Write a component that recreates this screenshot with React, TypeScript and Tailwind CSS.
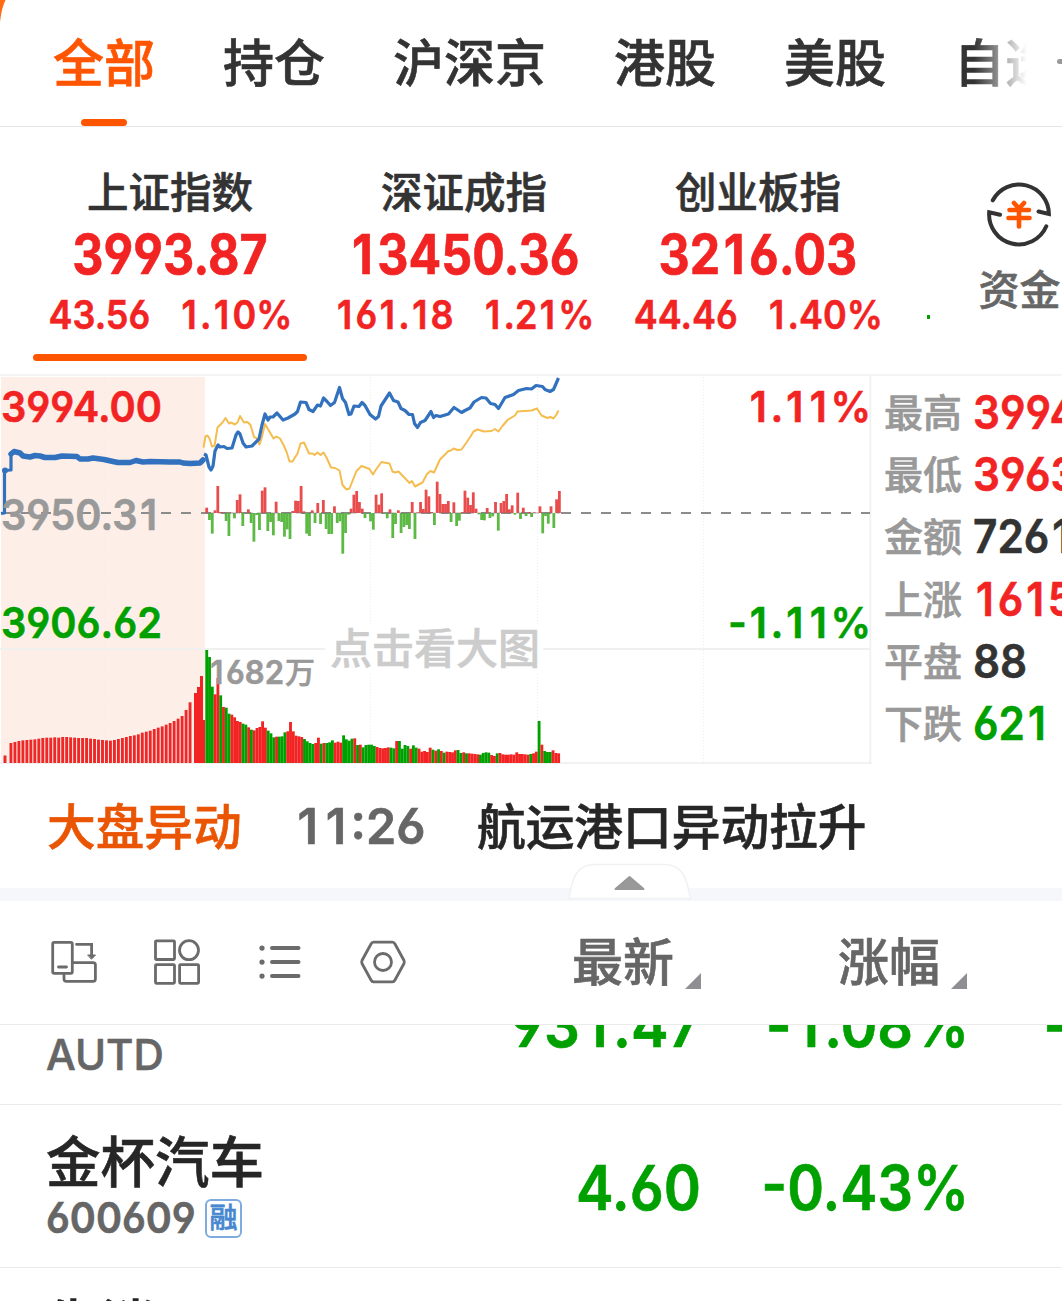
import type { ReactNode } from 'react';
import clsx from 'clsx';

const tabs = ['全部', '持仓', '沪深京', '港股', '美股', '自选'];

const indexes = [
  { name: '上证指数', value: '3993.87', diff: '43.56', pct: '1.10%', active: true },
  { name: '深证成指', value: '13450.36', diff: '161.18', pct: '1.21%', active: false },
  { name: '创业板指', value: '3216.03', diff: '44.46', pct: '1.40%', active: false },
];

const stats = [
  { label: '最高', value: '3994', color: 'text-[#f22323]' },
  { label: '最低', value: '3963', color: 'text-[#f22323]' },
  { label: '金额', value: '7261', color: 'text-[#333333]' },
  { label: '上涨', value: '1615', color: 'text-[#f22323]' },
  { label: '平盘', value: '88', color: 'text-[#333333]' },
  { label: '下跌', value: '621', color: 'text-[#00a000]' },
];

const rows = [
  { name: '', code: 'AUTD', margin: false, price: '931.47', pct: '-1.08%', next: '-' },
  { name: '金杯汽车', code: '600609', margin: true, price: '4.60', pct: '-0.43%', next: '' },
  { name: '生消', code: '', margin: false, price: '', pct: '', next: '' },
];

// call auction volume, one bar every 4px
const auctionVolume = [
  60, 63, 66, 68, 69, 70, 71, 73, 75, 76, 76, 77, 76, 78, 78, 77, 76, 75, 75, 75, 73, 72, 70, 69, 68,
  67, 69, 72, 75, 78, 81, 83, 86, 91, 94, 97, 102, 106, 110, 115, 120, 126, 133, 141, 159, 182,
];

// minute volume in thirds of a pixel, positive is up (red), negative is down (green)
const volume = [
  -339, -318, -229, 206, 255, -203, 168, -166, -148, 145, 137, 126, 123, -118, -115, 107, -100, 98, 105, 108,
  125, 106, -97, -89, -77, 79, -79, -80, -92, 95, 123, 95, 82, 80, 78, -72, -65, -60, -57, 60,
  76, -58, 60, -60, -62, -68, 61, 64, 61, -83, -71, -67, -73, 74, -54, 55, -47, -54, -55, -55,
  -51, 48, 45, 44, 45, 47, -46, -44, 66, -66, -43, -54, -51, 43, -53, -46, 43, 34, 36, 33,
  46, -40, 37, -41, 36, -31, 34, 33, 32, 38, -39, -30, 32, -29, 29, 28, 27, 26, -25, -30,
  -32, -31, 24, 21, -29, 30, 26, 25, 25, 26, 25, 32, 27, 27, 26, 25, -27, 29, 34, -126,
  55, -36, -33, -33, 38, 30, 29,
];

const momentum = [
  16, -21, -62, 8, 81, 3, 2, -24, -69, 1, -16, 39, 56, -39, -2, 11, -30, -86, -6, -51,
  67, 77, -54, -27, -67, 34, -24, -27, -71, -49, -78, 6, 37, 36, 81, 5, -62, -69, 8, -30,
  30, -33, 39, -48, -63, -63, 20, -30, -25, -122, -60, -5, 13, 55, 66, 33, 13, -15, -2, -25,
  -50, 55, 25, 59, -2, -16, 11, -75, -33, 8, -60, -42, -36, -48, 33, -78, 2, 33, 12, 70,
  50, 3, -36, 94, 57, 27, 27, 36, -27, 32, -39, -23, 2, 67, 46, 24, 62, 13, -4, -21,
  -22, 15, -15, -10, 33, -53, 30, 36, 57, 11, 23, -5, 61, -18, 16, -9, 3, -12, 2, 0,
  20, -61, -9, -32, 20, -45, 41, 66,
];

const auctionLine =
  '1,513.5 4.5,513 4.5,470.5 11,470 11,454 14,451.5 20,453 23,456 30,457 35,455.5 40,456 45,457.5 55,457.5 62,456 77,456.5 80,459 88,459 93,458 104,459.5 113,461.5 118,462.5 130,462.5 136,460.5 143,462 150,461.5 170,462 180,462 183,463 190,463.5 200,463 203,460';

const priceLine =
  '204,454 206,455 209,467 211,470 213,466 215,451 218,445 220,447 224,446.5 227,448.5 232,448 236,435 238,432 240,434 243,443 246,447 252,446 259,439 262,425 265,414 268,420 270,417 273,417 277,413 280,416.5 283,420 288,418 295,414 297.5,411.5 300.5,402 306,402.5 309,409.5 313,411.5 317.5,405 320.5,406 323.5,398 327,401.5 330.5,405.5 334.5,402.5 339.5,387.5 342.5,398.5 345.5,402.5 349,414.5 351,414 354,406 359,406.5 362,402.5 365,405.5 370,414.5 375.5,419 378.5,416.5 381,406 389.5,393 393.5,400.5 398,402 401,408.5 405,410.5 409,414.5 412.5,414.5 414.5,423.5 417.5,427.5 420.5,422.5 425,420.5 431,411.5 433.5,417.5 436,415.5 440,416.5 448.5,414 454,407.5 461.5,412.5 465,410.5 470,408 474,402 481.5,397.5 486,398 490.5,403.5 495,404.5 498.5,408.5 505,397.5 513.5,394.5 518.5,390.5 526.5,388.5 531.5,389 536,385.5 542.5,386.5 545,389.5 550,391.5 553.5,389.5 558.5,378';

const averageLine =
  '203.5,447.5 205.5,436.5 207.5,435.5 209.5,438.5 212,446.5 214.5,446 217.5,427.5 222.5,422.5 225.5,418 229,423.5 231,422.5 235,424.5 237.5,422.5 240,416 244,422.5 247.5,422 250.5,425 254,437 257,438.5 259.5,444.5 261.5,438.5 265,424 268.5,430 273.5,438.5 276.5,436.5 280,438.5 283.5,445 286.5,451.5 289.5,461.5 292.5,461.5 297.5,453.5 300.5,443.5 304,442.5 309,453.5 312.5,453.5 314.5,455 317.5,452.5 320.5,455 323.5,452.5 326.5,457.5 331,467.5 335,468 339.5,470.5 342.5,485 346.5,489.5 349.5,488.5 356.5,471 361.5,466 369.5,469 373,474.5 376,469.5 381.5,462 389.5,463.5 392.5,471.5 395,472.5 398.5,471.5 409.5,483 412,481 415,486.5 422.5,482.5 427,474 430.5,471 434,472.5 440,459.5 448.5,451 451,450.5 453.5,448.5 457.5,450 461.5,449.5 466.5,442.5 470.5,436.5 473.5,431.5 477.5,429.5 484,431.5 491.5,431 495,429 498.5,431.5 502.5,426 507.5,420 515,415.5 517.5,411.5 531.5,410.5 537,408.5 541.5,415.5 547.5,418 550.5,417 553.5,418.5 556.5,414.5 558.5,410.5';

// Numbers in near-tabular spacing, the narrow 1 gets padded to the width of the other digits
const Num = ({ children, className }: { children: string; className?: string }) => (
  <span
    className={clsx(
      "block font-['Inter','Liberation_Sans',sans-serif] [font-feature-settings:'cv03','cv04'] whitespace-nowrap",
      className,
    )}
  >
    {children.split('').map((c, i) => (c === '1' ? <span key={i} className="ml-[0.07em] mr-[0.09em]">1</span> : c))}
  </span>
);

const Chart = () => (
  <div className="relative w-[872px] h-[390px] -mt-0.5 shrink-0">
    <svg className="block size-full" viewBox="0 374 872 390">
      <rect x="1" y="377" width="204" height="386" fill="#fdeee8" />
      <path d="M104.5 377V763M370.5 377V763M537.5 377V763M703.5 377V763" stroke="#ededed" strokeDasharray="1 2" />
      <path d="M0 649H870M0 763.2H872M870.3 375V763" stroke="#f0f0f0" strokeWidth="1.8" fill="none" />
      <rect x="325" y="624" width="218" height="48" fill="#fff" />
      <path d="M1 513H870" stroke="#8c8c8c" strokeWidth="1.8" strokeDasharray="10 10" />

      {/* momentum */}
      {momentum.map((m, i) => (
        <rect
          key={i}
          x={205.3 + i * 2.777}
          y={m > 0 ? 513 - m / 3 : 513}
          width="2.8"
          height={Math.abs(m) / 3}
          fill={m > 0 ? '#e84c4c' : '#5cb944'}
        />
      ))}
      <path d="M205 513H560" stroke="#777" strokeWidth="1.2" strokeDasharray="9 4" opacity="0.6" />

      {/* volume */}
      <rect x="3.5" y="755.5" width="3" height="7.5" fill="#e82a2a" />
      {auctionVolume.map((v, i) => (
        <rect key={i} x={9.5 + i * 3.98} y={763 - v / 3} width="2.9" height={v / 3} fill="#ee2828" />
      ))}
      <path d="M194 763V693H197V687H200V676H203V720H205V763Z" fill="#f22323" />
      {volume.map((v, i) => (
        <rect
          key={i}
          x={205.3 + i * 2.793}
          y={763 - Math.abs(v) / 3}
          width="2.85"
          height={Math.abs(v) / 3}
          fill={v > 0 ? '#f22323' : '#00a000'}
        />
      ))}

      <polyline points={averageLine} fill="none" stroke="#f5bd4f" strokeWidth="2" strokeLinejoin="round" />
      <polyline points={auctionLine} fill="none" stroke="#3271bd" strokeWidth="3.2" strokeLinejoin="round" />
      <polyline
        points={auctionLine.split(' ').slice(4).join(' ')}
        fill="none"
        stroke="#3271bd"
        strokeWidth="5.5"
        strokeLinejoin="round"
        strokeLinecap="round"
      />
      <circle cx="5" cy="470.5" r="3" fill="#3271bd" />
      <polyline points={priceLine} fill="none" stroke="#3271bd" strokeWidth="3.2" strokeLinejoin="round" />
    </svg>

    {/* axis labels */}
    <div className="absolute left-px top-[11px] flex flex-col gap-[65px] text-[43px] leading-[43px] font-semibold">
      <Num className="origin-left scale-x-[0.925] text-[#f22323]">3994.00</Num>
      <Num className="origin-left scale-x-[0.925] text-[#999]">3950.31</Num>
      <Num className="origin-left scale-x-[0.925] text-[#00a000]">3906.62</Num>
    </div>
    <div className="absolute right-px top-[11px] flex flex-col items-end gap-[173px] text-[43px] leading-[43px] font-semibold">
      <Num className="origin-right scale-x-[0.94] text-[#f22323]">1.11%</Num>
      <Num className="origin-right scale-x-[0.94] text-[#00a000]">-1.11%</Num>
    </div>
    <div className="absolute left-[208px] top-[281px] flex items-center text-[#999]">
      <Num className="w-[77px] text-[33px] leading-[34px] font-semibold origin-left scale-x-[0.94]">1682</Num>
      <span className="-mt-1 text-[30px] leading-[34px]">万</span>
    </div>
    <div className="absolute left-[330px] top-[251px] text-[42px] leading-[42px] text-[#ccc]">点击看大图</div>
  </div>
);

const FundIcon = () => (
  <svg className="block size-[66px]" viewBox="987 182 66 66" fill="none" strokeLinecap="round">
    <g stroke="#333" strokeWidth="4">
      <path d="M992.8 201.3A29.8 29.8 0 0 1 1048.9 215L1038.5 212.5" />
      <path d="M1046.3 227.3A29.8 29.8 0 0 1 989.2 213.2L1000 215.7" />
    </g>
    <path d="M1014 204L1019 209.5L1024 204M1019 209.5V227.5M1009.5 211H1029M1008.5 219H1029.5" stroke="#ff5500" strokeWidth="4.6" />
  </svg>
);

const ToolIcon = ({ children }: { children: ReactNode }) => (
  <svg className="size-12" viewBox="0 0 48 48" fill="none" stroke="#6b6b6b" strokeWidth="2.8" strokeLinecap="round">
    {children}
  </svg>
);

const SortHeader = ({ label }: { label: string }) => (
  <div className="flex items-end gap-[11px]">
    <span className="text-[51px] leading-none text-[#666666]">{label}</span>
    <span className="size-4 mb-[-4px] bg-[#8e8e93] [clip-path:polygon(100%_0,100%_100%,0_100%)]" />
  </div>
);

const App = () => {
  return (
    <div className="relative w-[1062px] h-[1301px] overflow-hidden bg-white flex flex-col font-['Noto_Sans_CJK_SC',sans-serif] font-medium text-[#333333] [-webkit-text-stroke:0.6px]">
      <svg className="absolute left-0 top-0 w-2 h-6" viewBox="0 0 8 24">
        <path d="M0 0H5.5Q1.5 8 0 22Z" fill="#ff6a13" />
      </svg>

      {/* Tabs */}
      <nav className="relative h-[127px] shrink-0 border-b border-[#e5e5e5] flex gap-[68px] pl-[53px] pt-[35px] overflow-hidden">
        {tabs.map((t, i) => (
          <div key={t} className="flex flex-col items-center shrink-0">
            <span className={clsx('text-[51px] leading-[51px]', i === 0 && 'text-[#ff5500]')}>{t}</span>
            {i === 0 && <span className="mt-[33px] w-[46px] h-[7px] rounded-full bg-[#ff5500]" />}
          </div>
        ))}
        <div className="absolute right-0 top-0 h-[120px] w-[88px] bg-linear-to-r from-white/0 to-white to-60%" />
        <div className="absolute right-0 top-[59px] w-[5px] h-[5px] rounded-l-full bg-[#999]" />
      </nav>

      {/* Index cards */}
      <section className="flex h-[247px] shrink-0 pl-[23px]">
        {indexes.map((x) => (
          <div key={x.name} className="w-[294px] shrink-0 flex flex-col items-center pt-[42px]">
            <div className="text-[41.5px] leading-[42px]">{x.name}</div>
            <Num className="mt-[15px] text-[55px] leading-[56px] font-bold text-[#f22323] scale-x-[0.88]">{x.value}</Num>
            <div className="mt-3 flex gap-[32px] text-[40px] leading-[42px] font-semibold text-[#f22323] scale-x-[0.9]">
              <Num>{x.diff}</Num>
              <Num>{x.pct}</Num>
            </div>
            {x.active && <div className="mt-[18px] w-[274px] h-[7px] rounded-full bg-[#ff5500]" />}
          </div>
        ))}
        <div className="w-[73px] shrink-0 pl-[22px] pt-[188px]">
          <div className="w-[3px] h-1 bg-[#00a000]" />
        </div>
        <div className="w-[83px] shrink-0 pt-[54px] flex flex-col items-center">
          <FundIcon />
          <span className="mt-[19px] text-[41px] leading-[42px] text-[#666666] whitespace-nowrap">资金</span>
        </div>
      </section>

      {/* Chart and market breadth */}
      <section className="flex h-[390px] shrink-0 border-t-2 border-[#f4f4f4] overflow-hidden">
        <Chart />
        <div className="flex-1 pl-[12px] pt-[5px] overflow-hidden">
          {stats.map((s) => (
            <div key={s.label} className="h-[62.3px] flex items-center gap-[11px]">
              <span className="-mt-1 text-[39px] leading-none text-[#999] shrink-0">{s.label}</span>
              <Num className={clsx('text-[46.5px] leading-none font-semibold origin-left scale-x-[0.91]', s.color)}>{s.value}</Num>
            </div>
          ))}
        </div>
      </section>

      {/* News ticker */}
      <section className="h-[124px] shrink-0 flex items-center pl-[47px] pt-0.5 whitespace-nowrap text-[48.7px] leading-none">
        <span className="w-[247px] -mt-1.5 text-[#ea5504]">大盘异动</span>
        <Num className="w-[183px] text-[49.5px] font-semibold text-[#666666] origin-left scale-x-[0.98]">11:26</Num>
        <span className="-mt-1.5 text-[#262626]">航运港口异动拉升</span>
      </section>
      <div className="relative h-[13px] shrink-0 bg-[#f5f7fa]">
        <svg className="absolute left-[567px] -top-[26px] w-[126px] h-[38px]" viewBox="567 862 126 38">
          <path d="M569 898.5C572 884 573 864.5 595 864.5H664C686 864.5 687 884 690.5 898.5Z" fill="#fff" stroke="#eff1f3" strokeWidth="1.5" />
          <path d="M629.5 877L643.5 889H615.5Z" fill="#999" stroke="#999" strokeWidth="2" strokeLinejoin="round" />
        </svg>
      </div>

      {/* Toolbar */}
      <section className="h-[124px] shrink-0 border-b border-[#ebebeb] flex items-center pb-0.5">
        <div className="w-[701px] pl-[50px] flex items-center justify-between">
          <div className="flex gap-[55px]">
            <ToolIcon>
              <rect x="2.7" y="4.3" width="19.6" height="31" rx="1.5" />
              <path d="M8.5 29H16.5M26.5 6.3H41.6V17M22.5 24.7H43Q45.4 24.7 45.4 27V41Q45.4 43.3 43 43.3H16.5Q14 43.3 14 41V36" />
              <path d="M38 17H45.5L41.7 21Z" fill="#6b6b6b" strokeWidth="1" />
            </ToolIcon>
            <ToolIcon>
              <rect x="2.5" y="2.8" width="19" height="18.7" rx="1" />
              <circle cx="36" cy="12.2" r="9.5" />
              <rect x="2.5" y="26.6" width="19" height="18.7" rx="1" />
              <rect x="26.6" y="26.6" width="19" height="18.7" rx="1" />
            </ToolIcon>
            <ToolIcon>
              <path d="M16 10H42.5M16 24H42.5M16 38H42.5" strokeWidth="4" />
              <path d="M6 10V10.1M6 24V24.1M6 38V38.1" strokeWidth="5.2" />
            </ToolIcon>
            <ToolIcon>
              <path d="M14.5 4.2H33.5Q35 4.2 36 6L45 22.5Q45.7 24 45 25.5L36 42Q35 43.8 33.5 43.8H14.5Q13 43.8 12 42L3 25.5Q2.3 24 3 22.5L12 6Q13 4.2 14.5 4.2Z" />
              <circle cx="24" cy="24" r="8.5" />
            </ToolIcon>
          </div>
          <div className="-mt-1">
            <SortHeader label="最新" />
          </div>
        </div>
        <div className="w-[266px] -mt-1 flex justify-end">
          <SortHeader label="涨幅" />
        </div>
      </section>

      {/* Stock list, scrolled halfway through the first row */}
      <section className="flex-1 overflow-hidden">
        <div className="-mt-[83px]">
          {rows.map((r, i) => (
            <div key={i} className="h-[163px] border-b border-[#ebebeb] flex items-center text-[62px] leading-none">
              <div className="w-[400px] h-full pl-[46px] pt-[27px]">
                <div className="h-[54px] text-[54.5px] leading-[54px] text-[#262626]">{r.name}</div>
                <div className="mt-3 h-10 flex items-center gap-[12px] text-[#666666]">
                  <Num className={clsx('text-[42px]', r.margin ? 'w-[147px] font-semibold origin-left scale-x-[0.94]' : 'font-medium')}>{r.code}</Num>
                  {r.margin && (
                    <span className="w-[37px] h-[39px] flex items-center justify-center rounded-md border-2 border-[#7fabdf] text-[28px] leading-none pb-1 text-[#4687d0]">融</span>
                  )}
                </div>
              </div>
              <Num className="w-[301px] pt-1 text-right font-semibold text-[#00a000] origin-right scale-x-[0.91]">{r.price}</Num>
              <Num className="w-[268px] pt-1 text-right font-semibold text-[#00a000] origin-right scale-x-[0.9]">{r.pct}</Num>
              <Num className="w-[93px] pt-1 pl-[74px] font-semibold text-[#00a000]">{r.next}</Num>
            </div>
          ))}
        </div>
      </section>
    </div>
  );
};

export default App;
